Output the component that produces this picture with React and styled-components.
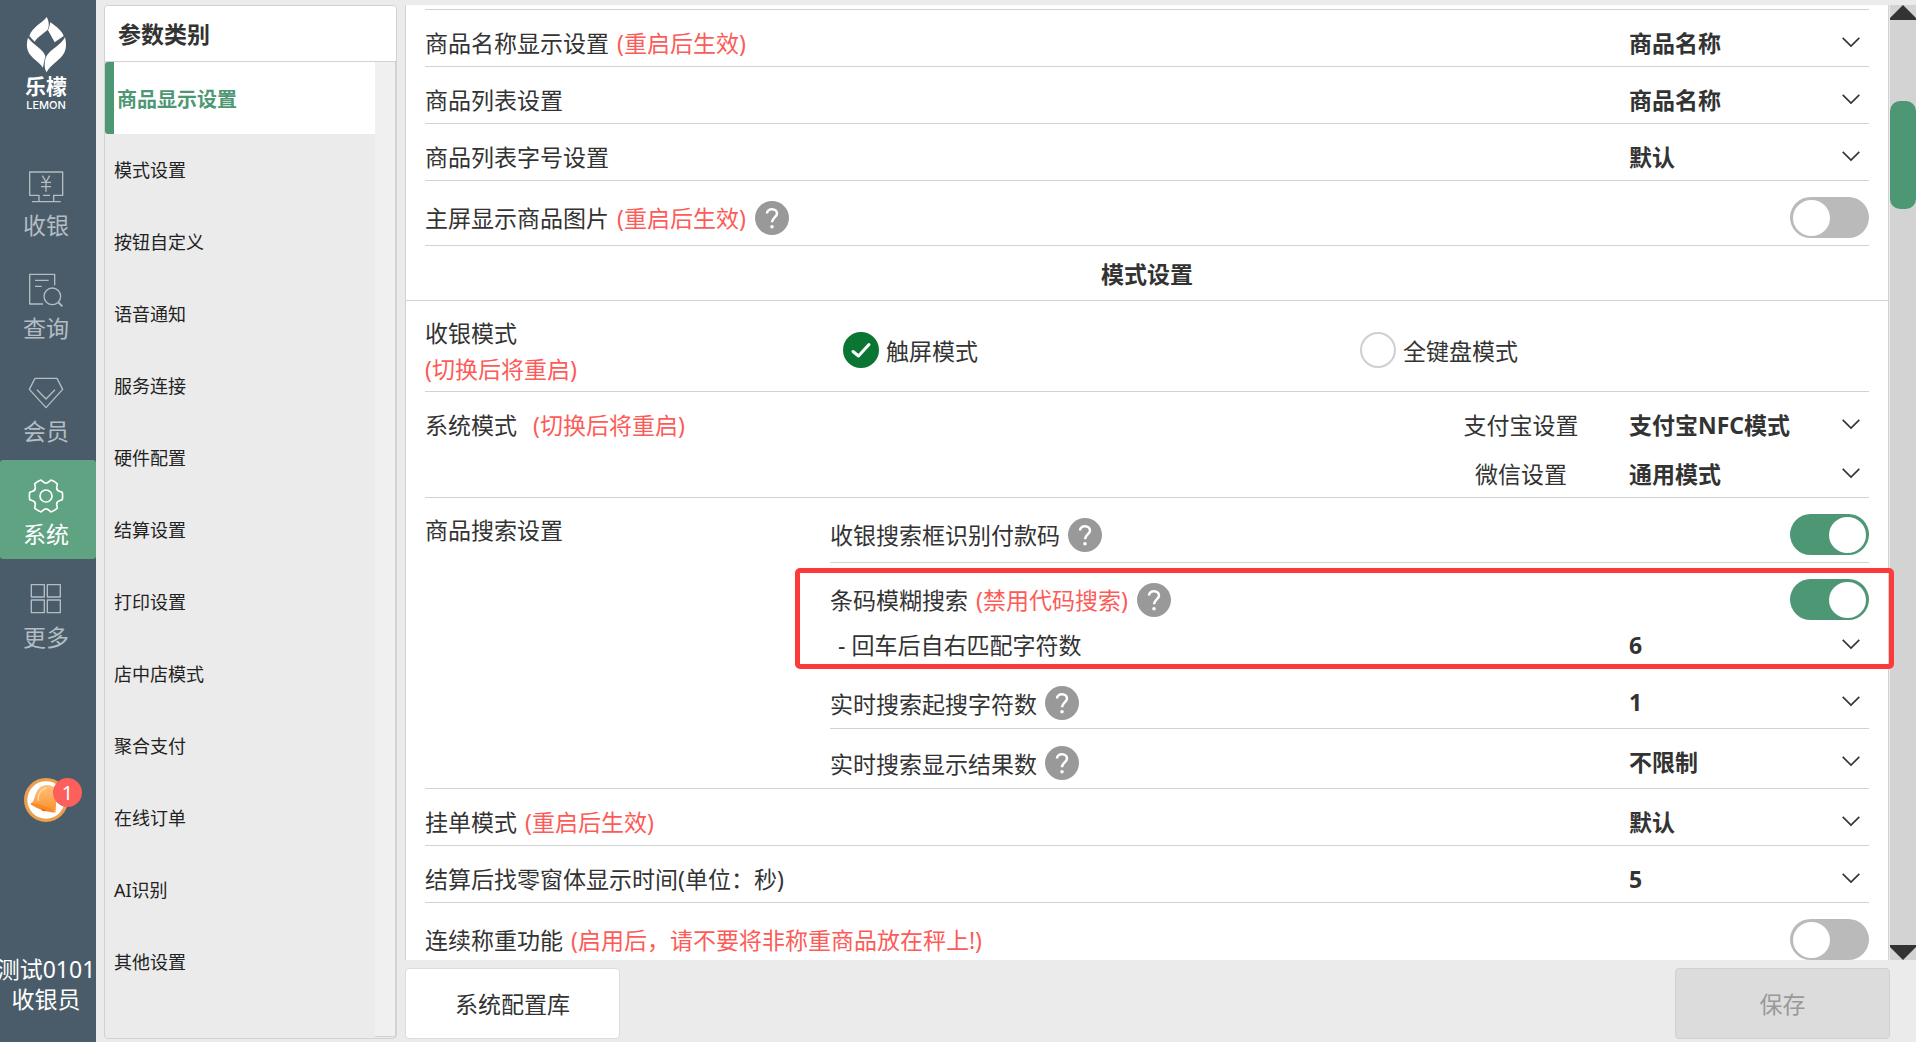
import React, { useState } from "react";
import styled, { createGlobalStyle, css } from "styled-components";

const color = {
  rail: "#4a5c69",
  railActive: "#5fa382",
  page: "#ebebeb",
  line: "#d2d2d2",
  text: "#333333",
  green: "#4d9775",
  red: "#fd5b58",
};

const GlobalStyle = createGlobalStyle`
  *, *::before, *::after { box-sizing: border-box; }
  body {
    margin: 0;
    background: ${color.page};
    color: ${color.text};
    font-family: "Noto Sans", "Noto Sans CJK SC", sans-serif;
    font-size: 23px;
  }
  button, select, input { font: inherit; color: inherit; margin: 0; padding: 0; border: 0; background: none; }
  button { cursor: pointer; }
  svg { display: block; }
`;

const Shell = styled.div`
  display: grid;
  grid-template-columns: 96px 293px 1fr;
  column-gap: 8px;
  height: 100vh;
  overflow: hidden;
`;

/* ---------- left rail ---------- */

const Rail = styled.aside`
  display: flex;
  flex-direction: column;
  min-height: 0;
  overflow: hidden;
  background: ${color.rail};
`;

const Brand = styled.div`
  display: flex;
  flex-direction: column;
  align-items: center;
  height: 151px;
  padding: 16px 4px 0 0;
  color: #fff;
`;

const BrandName = styled.span`
  font-size: 21px;
  font-weight: 700;
  line-height: 26px;
`;

const BrandLatin = styled.span`
  font-family: Inter, "Noto Sans", sans-serif;
  font-size: 11px;
  font-weight: 500;
  line-height: 12px;
`;

const RailNav = styled.nav`
  display: flex;
  flex-direction: column;
  gap: 4px;
`;

const RailItem = styled.button`
  display: flex;
  flex-direction: column;
  align-items: center;
  gap: 4px;
  height: 99px;
  padding: 18px 4px 0 0;
  border-radius: 3px;
  line-height: 33px;
  color: ${(p) => (p.$active ? "#fff" : "#b4bdc3")};
  background: ${(p) => (p.$active ? color.railActive : "transparent")};
`;

const Notice = styled.button`
  position: relative;
  width: 44px;
  height: 44px;
  margin: 116px 0 0 24px;
`;

const Badge = styled.span`
  position: absolute;
  top: 0;
  left: 29px;
  width: 29px;
  height: 29px;
  border-radius: 50%;
  background: #fd5f5d;
  color: #fff;
  font-size: 20px;
  line-height: 29px;
  text-align: center;
`;

const User = styled.div`
  display: flex;
  flex-direction: column;
  align-items: center;
  margin-top: auto;
  padding: 0 4px 28px 0;
  color: #fff;
  line-height: 30px;
  white-space: nowrap;
`;

/* ---------- category panel ---------- */

const Categories = styled.section`
  display: flex;
  flex-direction: column;
  min-height: 0;
  margin: 5px 0 3px;
  border: 1px solid ${color.line};
  border-radius: 4px;
  overflow: hidden;
`;

const CategoryTitle = styled.h2`
  margin: 0;
  padding: 2px 0 0 13px;
  height: 56px;
  border-bottom: 1px solid ${color.line};
  background: #fff;
  font-size: 23px;
  font-weight: 700;
  line-height: 53px;
`;

const CategoryBody = styled.div`
  display: flex;
  flex: 1;
  min-height: 0;
  margin-bottom: 1px;
`;

const CategoryList = styled.nav`
  flex: 1;
  display: flex;
  flex-direction: column;
`;

const CategoryItem = styled.button`
  height: 72px;
  padding: 0 0 2px 9px;
  text-align: left;
  font-size: 18px;
  color: #222;
  ${(p) =>
    p.$active &&
    css`
      padding: 0 0 0 3px;
      border-left: 9px solid ${color.green};
      border-radius: 3px 0 0 3px;
      background: #fff;
      color: ${color.green};
      font-size: 20px;
      font-weight: 700;
    `}
`;

const CategoryTrack = styled.div`
  width: 21px;
  border-right: 1px solid ${color.line};
  border-bottom: 1px solid ${color.line};
  background: #f0f0f0;
`;

/* ---------- settings ---------- */

const Main = styled.main`
  display: flex;
  flex-direction: column;
  min-width: 0;
  min-height: 0;
  padding: 5px 0 3px;
`;

const Viewport = styled.div`
  display: flex;
  flex: 1;
  min-height: 0;
`;

const Panel = styled.div`
  position: relative;
  z-index: 1;
  flex: 1;
  min-width: 0;
  padding-top: 4px;
  border: solid ${color.line};
  border-width: 0 1px;
  overflow-x: visible;
  overflow-y: clip;
  background: #fff;
`;

const Group = styled.div`
  margin: 0 19px;
  border-top: ${(p) => (p.$ruled ? `1px solid ${color.line}` : "0")};
`;

const Row = styled.div`
  display: flex;
  align-items: ${(p) => (p.$top ? "flex-start" : "center")};
  justify-content: space-between;
  padding: 16px 0 7px;
  border-bottom: 1px solid ${color.line};
`;

const Marked = styled.div`
  position: relative;
  display: flex;
  flex-direction: column;
  gap: 8px;
  padding: 16px 0 8px;
  &::after {
    content: "";
    position: absolute;
    inset: 5px -25px 0 -35px;
    border: 5px solid #fd3a3a;
    border-radius: 5px;
    pointer-events: none;
  }
`;

const Line = styled.div`
  display: flex;
  align-items: center;
  justify-content: space-between;
`;

const Label = styled.div`
  display: flex;
  align-items: center;
  gap: 8px;
  min-height: ${(p) => (p.$tall ? "36px" : "33px")};
  padding-left: ${(p) => (p.$indent ? "8px" : "0")};
`;

const Caption = styled.label`
  padding-top: 1px;
  line-height: 32px;
  white-space: nowrap;
`;

const Note = styled.span`
  margin: 0 1px 0 ${(p) => (p.$wide ? "16px" : "8px")};
  color: ${color.red};
`;

const HelpButton = styled.button`
  width: 34px;
  height: 34px;
  border-radius: 50%;
`;

const SectionTitle = styled.h3`
  margin: 0;
  padding: 3px 0 1px;
  border-bottom: 1px solid ${color.line};
  font-size: 23px;
  font-weight: 700;
  line-height: 50px;
  text-align: center;
`;

const ModeRow = styled.fieldset`
  display: grid;
  grid-template-columns: 418px 1fr 509px;
  align-items: center;
  min-width: 0;
  margin: 0;
  padding: 12px 0 4px;
  border: 0;
  border-bottom: 1px solid ${color.line};
`;

const ModeLabel = styled.div`
  display: flex;
  flex-direction: column;
  padding-top: 2px;
  line-height: 36px;
`;

const Warning = styled.span`
  color: ${color.red};
`;

const ModeOption = styled.label`
  display: flex;
  align-items: center;
  gap: 7px;
`;

const RadioBox = styled.span`
  display: grid;
  & > * {
    grid-area: 1 / 1;
  }
  svg {
    pointer-events: none;
  }
`;

const RadioInput = styled.input`
  appearance: none;
  width: 36px;
  height: 36px;
  border: 2px solid #cfcfcf;
  border-radius: 50%;
  background: #fff;
  &:checked {
    border-color: #0b7633;
    background: #0b7633;
  }
`;

const SelectStack = styled.div`
  display: flex;
  flex-direction: column;
  gap: 16px;
`;

const SelectLine = styled.div`
  display: flex;
  align-items: center;
`;

const SelectCaption = styled.label`
  width: 216px;
  padding-top: 1px;
  line-height: 32px;
  text-align: center;
`;

const SelectBox = styled.div`
  display: grid;
  align-items: center;
  width: 240px;
  & > * {
    grid-area: 1 / 1;
  }
  svg {
    justify-self: end;
    margin-right: 9px;
    pointer-events: none;
  }
`;

const SelectInput = styled.select`
  appearance: none;
  height: 33px;
  padding-top: 1px;
  font-weight: 700;
  line-height: 32px;
`;

const ToggleInput = styled.input`
  appearance: none;
  display: flex;
  align-items: center;
  width: 79px;
  height: 41px;
  padding: 0 3px;
  border-radius: 21px;
  background: #bababa;
  cursor: pointer;
  &::before {
    content: "";
    width: 37px;
    height: 36px;
    border-radius: 50%;
    background: #fff;
  }
  &:checked {
    justify-content: flex-end;
    background: ${color.green};
  }
`;

const SplitRow = styled.div`
  display: grid;
  grid-template-columns: 405px 1fr;
  border-bottom: 1px solid ${color.line};
`;

const SplitLabel = styled.div`
  padding-top: 16px;
  line-height: 32px;
`;

const SplitBody = styled.div`
  & > :last-child {
    border-bottom: 0;
  }
`;

const Scrollbar = styled.div`
  display: flex;
  flex-direction: column;
  justify-content: space-between;
  width: 26px;
  margin-left: 1px;
  background: #d3d3d3;
`;

const ScrollThumb = styled.div`
  height: 108px;
  margin: 81px 0 auto;
  border-radius: 10px;
  background: ${color.green};
`;

const Footer = styled.footer`
  display: flex;
  justify-content: space-between;
  margin: 8px 26px 0 0;
`;

const FooterButton = styled.button`
  width: 215px;
  height: 71px;
  padding-bottom: 2px;
  border: 1px solid ${(p) => (p.disabled ? "#d0d0d0" : "#dcdcdc")};
  border-radius: 4px;
  background: ${(p) => (p.disabled ? "#dcdcdc" : "#fff")};
  color: ${(p) => (p.disabled ? "#999" : color.text)};
`;

/* ---------- drawings ---------- */

const Stroke = ({ box, width = 4, children }) => (
  <svg width="36" height="36" viewBox={box} fill="none" stroke="currentColor" strokeWidth={width} strokeLinejoin="round" aria-hidden="true">
    {children}
  </svg>
);

const CashIcon = () => (
  <Stroke box="85 506 108 108">
    <path d="M118 603V585H90V515H189V585H162V603M130 585H151M97 604H183" />
    <path d="M128 526L139 545L150 526M139 545V574M124 546H154M124 559H154" />
  </Stroke>
);

const QueryIcon = () => (
  <Stroke box="85 813 108 108">
    <path d="M130 909H90V820H165V853M106 838H147M106 856H126" />
    <circle cx="158" cy="886" r="25" />
    <path d="M176 904L188 916" strokeWidth="6" />
  </Stroke>
);

const MemberIcon = () => (
  <Stroke box="88 43 108 108">
    <path d="M109 53H175L192 86L142 141L92 86ZM115 87L142 115L169 87" />
  </Stroke>
);

const gearPath = (() => {
  const at = (deg, r) => {
    const a = (deg * Math.PI) / 180;
    return `${(54 + r * Math.cos(a)).toFixed(1)} ${(54 + r * Math.sin(a)).toFixed(1)}`;
  };
  let d = `M${at(-13, 50)}`;
  for (let a = 0; a < 360; a += 60) {
    d += `Q${at(a, 51)} ${at(a + 13, 50)}L${at(a + 18, 44)}Q${at(a + 30, 34)} ${at(a + 42, 44)}L${at(a + 47, 50)}`;
  }
  return d + "Z";
})();

const GearIcon = () => (
  <Stroke box="0 0 108 108" width={5}>
    <path d={gearPath} />
    <circle cx="54" cy="54" r="18" />
  </Stroke>
);

const MoreIcon = () => (
  <Stroke box="88 665 108 108">
    <path d="M98 676H137V713H98ZM146 676H185V713H146ZM98 722H137V760H98ZM146 722H185V760H146Z" />
  </Stroke>
);

const LemonLogo = () => (
  <svg width="41" height="57" viewBox="78 48 123 171" fill="#fff" aria-hidden="true">
    <path d="M140 51C130 68 96 80 88 108L104 125C112 111 133 98 143 89C148 80 148 65 140 51Z" />
    <path d="M151 67C149 76 148 83 144 91L164 127L191 108C186 92 169 80 151 67Z" />
    <path d="M84 113C78 133 80 151 91 165C103 180 119 188 129 203C131 190 134 179 136 169C133 150 99 134 84 113Z" />
    <path d="M195 112C200 131 200 151 188 166C174 184 150 196 140 217C135 210 134 202 134 194C134 183 136 174 141 166C152 149 183 135 195 112Z" />
  </svg>
);

const BellIcon = () => (
  <svg width="44" height="44" viewBox="0 0 132 132" aria-hidden="true">
    <defs>
      <linearGradient id="bell" x1="0" y1="0" x2="0" y2="1">
        <stop offset="0" stopColor="#ffc27c" />
        <stop offset="1" stopColor="#fb9232" />
      </linearGradient>
    </defs>
    <circle cx="66" cy="66" r="61" fill="#fff" stroke="#eb9f4f" strokeWidth="10" />
    <path d="M21 76C34 68 31 47 44 32C55 19 74 18 88 26C104 35 96 65 95 99L22 79Z" fill="url(#bell)" />
    <path d="M20 75C40 76 76 86 97 103C78 105 43 96 20 79Z" fill="#fb8a22" />
    <path d="M50 91C53 102 64 102 67 95Z" fill="#ee6c10" />
    <path d="M42 68C42 48 52 34 67 30" fill="none" stroke="#ffd9a8" strokeWidth="4" />
  </svg>
);

const Chevron = () => (
  <svg width="18" height="12" viewBox="0 0 18 12" fill="none" stroke="#333" strokeWidth="1.6" aria-hidden="true">
    <path d="M0.7 0.9L9 9.1L17.3 0.9" />
  </svg>
);

const Help = () => (
  <HelpButton type="button" aria-label="帮助">
    <svg width="34" height="34" viewBox="0 0 34 34" aria-hidden="true">
      <circle cx="17" cy="17" r="17" fill="#999" />
      <path d="M12 12.6C12 9.9 14.1 8.2 17 8.2C19.9 8.2 22 10 22 12.6C22 16.2 17 16.6 17 21.2" fill="none" stroke="#fff" strokeWidth="2.5" />
      <circle cx="17" cy="25.8" r="1.8" fill="#fff" />
    </svg>
  </HelpButton>
);

/* ---------- controls ---------- */

const Select = ({ id, value }) => (
  <SelectBox>
    <SelectInput id={id} defaultValue={value}>
      <option>{value}</option>
    </SelectInput>
    <Chevron />
  </SelectBox>
);

const Toggle = ({ id, on }) => <ToggleInput id={id} type="checkbox" role="switch" defaultChecked={on} />;

const Field = ({ id, text, note, wide, help, indent, tall }) => (
  <Label $indent={indent} $tall={tall}>
    <Caption htmlFor={id}>
      {text}
      {note && <Note $wide={wide}>{note}</Note>}
    </Caption>
    {help && <Help />}
  </Label>
);

const SelectRow = ({ id, value, ...field }) => (
  <Row $top>
    <Field id={id} {...field} />
    <Select id={id} value={value} />
  </Row>
);

const ToggleRow = ({ id, on, ...field }) => (
  <Row>
    <Field id={id} {...field} />
    <Toggle id={id} on={on} />
  </Row>
);

const Radio = ({ label, checked, onChange }) => (
  <ModeOption>
    <RadioBox>
      <RadioInput type="radio" name="cash-mode" checked={checked} onChange={onChange} />
      {checked && (
        <svg width="36" height="36" viewBox="0 0 36 36" fill="none" stroke="#fff" strokeWidth="3" strokeLinecap="round" strokeLinejoin="round" aria-hidden="true">
          <path d="M10 19.5L15.5 24L26 12.5" />
        </svg>
      )}
    </RadioBox>
    {label}
  </ModeOption>
);

const railItems = [
  ["收银", CashIcon],
  ["查询", QueryIcon],
  ["会员", MemberIcon],
  ["系统", GearIcon],
  ["更多", MoreIcon],
];

const categories = [
  "商品显示设置", "模式设置", "按钮自定义", "语音通知", "服务连接", "硬件配置", "结算设置",
  "打印设置", "店中店模式", "聚合支付", "在线订单", "AI识别", "其他设置",
];

export default function App() {
  const [section, setSection] = useState("系统");
  const [category, setCategory] = useState(categories[0]);
  const [mode, setMode] = useState("触屏模式");

  return (
    <>
      <GlobalStyle />
      <Shell>
        <Rail>
          <Brand>
            <LemonLogo />
            <BrandName>乐檬</BrandName>
            <BrandLatin>LEMON</BrandLatin>
          </Brand>
          <RailNav>
            {railItems.map(([name, Icon]) => (
              <RailItem key={name} type="button" $active={name === section} onClick={() => setSection(name)}>
                <Icon />
                {name}
              </RailItem>
            ))}
          </RailNav>
          <Notice type="button">
            <BellIcon />
            <Badge>1</Badge>
          </Notice>
          <User>
            <span>测试0101</span>
            <span>收银员</span>
          </User>
        </Rail>

        <Categories>
          <CategoryTitle>参数类别</CategoryTitle>
          <CategoryBody>
            <CategoryList>
              {categories.map((name) => (
                <CategoryItem key={name} type="button" $active={name === category} onClick={() => setCategory(name)}>
                  {name}
                </CategoryItem>
              ))}
            </CategoryList>
            <CategoryTrack />
          </CategoryBody>
        </Categories>

        <Main>
          <Viewport>
            <Panel>
              <Group $ruled>
                <SelectRow id="name-display" text="商品名称显示设置" note="(重启后生效)" value="商品名称" />
                <SelectRow id="list" text="商品列表设置" value="商品名称" />
                <SelectRow id="list-size" text="商品列表字号设置" value="默认" />
                <ToggleRow id="picture" text="主屏显示商品图片" note="(重启后生效)" help />
              </Group>
              <SectionTitle>模式设置</SectionTitle>
              <Group>
                <ModeRow>
                  <ModeLabel>
                    <span>收银模式</span>
                    <Warning>(切换后将重启)</Warning>
                  </ModeLabel>
                  {["触屏模式", "全键盘模式"].map((name) => (
                    <Radio key={name} label={name} checked={name === mode} onChange={() => setMode(name)} />
                  ))}
                </ModeRow>
                <Row $top>
                  <Field id="alipay" text="系统模式" note="(切换后将重启)" wide />
                  <SelectStack>
                    <SelectLine>
                      <SelectCaption htmlFor="alipay">支付宝设置</SelectCaption>
                      <Select id="alipay" value="支付宝NFC模式" />
                    </SelectLine>
                    <SelectLine>
                      <SelectCaption htmlFor="wechat">微信设置</SelectCaption>
                      <Select id="wechat" value="通用模式" />
                    </SelectLine>
                  </SelectStack>
                </Row>
                <SplitRow>
                  <SplitLabel>商品搜索设置</SplitLabel>
                  <SplitBody>
                    <ToggleRow id="pay-code" text="收银搜索框识别付款码" help on />
                    <Marked>
                      <Line>
                        <Field id="fuzzy" text="条码模糊搜索" note="(禁用代码搜索)" help />
                        <Toggle id="fuzzy" on />
                      </Line>
                      <Line>
                        <Field id="match-chars" text="- 回车后自右匹配字符数" indent />
                        <Select id="match-chars" value="6" />
                      </Line>
                    </Marked>
                    <SelectRow id="min-chars" text="实时搜索起搜字符数" help tall value="1" />
                    <SelectRow id="max-results" text="实时搜索显示结果数" help tall value="不限制" />
                  </SplitBody>
                </SplitRow>
                <SelectRow id="hold" text="挂单模式" note="(重启后生效)" value="默认" />
                <SelectRow id="change-time" text="结算后找零窗体显示时间(单位：秒)" value="5" />
                <ToggleRow id="weigh" text="连续称重功能" note="(启用后，请不要将非称重商品放在秤上!)" />
              </Group>
            </Panel>
            <Scrollbar>
              <svg width="26" height="15" viewBox="0 0 26 15" fill="#333" aria-hidden="true">
                <path d="M13 0L26 13V15H0V13Z" />
              </svg>
              <ScrollThumb />
              <svg width="26" height="15" viewBox="0 0 26 15" fill="#333" aria-hidden="true">
                <path d="M13 15L26 2V0H0V2Z" />
              </svg>
            </Scrollbar>
          </Viewport>
          <Footer>
            <FooterButton type="button">系统配置库</FooterButton>
            <FooterButton type="button" disabled>
              保存
            </FooterButton>
          </Footer>
        </Main>
      </Shell>
    </>
  );
}
